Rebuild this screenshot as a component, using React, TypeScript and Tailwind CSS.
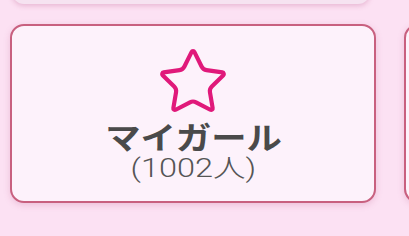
import { Star } from "lucide-react";

function MenuCard({ label, count }: { label: string; count: number }) {
  return (
    <div className="flex h-[179px] w-[366px] shrink-0 flex-col items-center rounded-[14px] border-2 border-[#c8607f] bg-[#fdf2fb] shadow-[0_2px_6px_rgba(190,90,140,0.25)]">
      <Star
        size={74}
        strokeWidth={1.35}
        className="mt-[19px] text-[#e0197a]"
      />
      <p className="scale-x-[1.14] text-[31px] leading-[33px] font-bold text-[#4a4a4a]">
        {label}
      </p>
      <p
        className="mt-[2px] scale-x-[1.3] text-[25px] leading-[30px] font-light text-[#555555]"
        style={{ fontFamily: 'Roboto, "Noto Sans CJK JP", sans-serif' }}
      >
        ({count}人)
      </p>
    </div>
  );
}

export default function App() {
  return (
    <div
      className="h-[236px] w-[409px] overflow-hidden bg-[#fce1f3]"
      style={{ fontFamily: '"Noto Sans CJK JP", "Noto Sans", sans-serif' }}
    >
      {/* previous card peeking at the top */}
      <div className="mx-[12px] -mt-[30px] h-[34px] w-[358px] rounded-[12px] bg-[#f6e3f1] shadow-[0_2px_5px_rgba(190,90,140,0.3)]" />

      <div className="mt-[20px] flex gap-[28px] pl-[10px]">
        <MenuCard label="マイガール" count={1002} />
        <MenuCard label="お気に入り" count={0} />
      </div>
    </div>
  );
}
